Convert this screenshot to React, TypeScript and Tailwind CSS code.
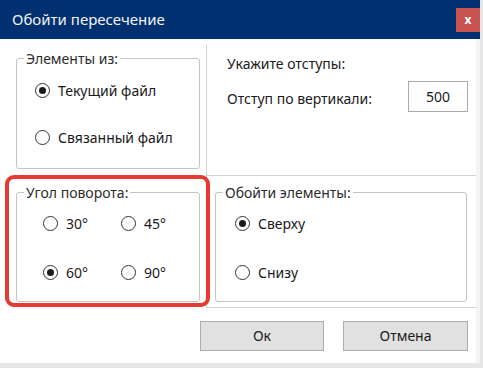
import React from 'react';

function Radio({ checked, label }: { checked?: boolean; label: string }) {
  return (
    <div className="flex items-center gap-[8px]">
      <span className="flex h-[15px] w-[15px] items-center justify-center rounded-full border border-[#333333] bg-white">
        {checked && <span className="h-[7px] w-[7px] rounded-full bg-[#1a1a1a]" />}
      </span>
      <span className="text-[14px] text-[#1a1a1a]">{label}</span>
    </div>
  );
}

function Group({
  title,
  className,
  children,
}: {
  title: string;
  className: string;
  children: React.ReactNode;
}) {
  return (
    <fieldset className={`rounded-[3px] border border-[#c4c4c4] px-0 ${className}`}>
      <legend className="ml-[7px] px-[2px] text-[14px] leading-[15px] text-[#2b2b2b]">{title}</legend>
      {children}
    </fieldset>
  );
}

export default function App() {
  return (
    <div
      className="h-[368px] w-[483px] bg-[#e6e6e6]"
      style={{ fontFamily: '"Noto Sans", "Open Sans", sans-serif' }}
    >
      <div className="flex h-[363px] w-[480px] flex-col">
        <div className="flex h-[39px] items-center justify-between bg-[#00306f] pl-[12px]">
          <span className="text-[15px] text-[#f2f4f8]">Обойти пересечение</span>
          <span className="flex h-[24px] w-[24px] items-center justify-center bg-[#c85250] text-[12px] font-bold text-white">
            x
          </span>
        </div>

        <div className="flex flex-1 flex-col border-r-[4px] border-[#f4f4f4] bg-white">
          <div className="flex h-[137px]">
            <div className="w-[206px] pl-[16px] pt-[12px]">
              <Group title="Элементы из:" className="h-[118px] w-[184px]">
                <div className="flex flex-col gap-[26px] pl-[18px] pt-[14px]">
                  <Radio checked label="Текущий файл" />
                  <Radio label="Связанный файл" />
                </div>
              </Group>
            </div>
            <div className="mt-[6px] flex flex-1 flex-col border-b border-l border-[#d4d4d4] pl-[20px] pt-[8px]">
              <span className="text-[14px] text-[#1a1a1a]">Укажите отступы:</span>
              <div className="mt-[7px] flex items-center justify-between pr-[8px]">
                <span className="mt-[4px] text-[14px] text-[#1a1a1a]">Отступ по вертикали:</span>
                <div className="flex h-[31px] w-[60px] items-center justify-center border border-[#a9a9a9] text-[14px] text-[#1a1a1a]">
                  500
                </div>
              </div>
            </div>
          </div>

          <div className="relative flex h-[132px]">
            <div className="w-[206px] pl-[16px] pt-[9px]">
              <Group title="Угол поворота:" className="h-[117px] w-[184px]">
                <div className="grid grid-cols-2 gap-y-[28px] pl-[26px] pt-[13px]">
                  <Radio label="30°" />
                  <Radio label="45°" />
                  <Radio checked label="60°" />
                  <Radio label="90°" />
                </div>
              </Group>
            </div>
            <div className="flex flex-1 border-b border-l border-[#d4d4d4] pl-[8px] pt-[9px]">
              <Group title="Обойти элементы:" className="h-[117px] w-[252px]">
                <div className="flex flex-col gap-[28px] pl-[19px] pt-[13px]">
                  <Radio checked label="Сверху" />
                  <Radio label="Снизу" />
                </div>
              </Group>
            </div>
            <div className="pointer-events-none absolute left-[5px] top-[-1px] h-[132px] w-[205px] rounded-[9px] border-[4px] border-[#e53b33]" />
          </div>

          <div className="flex flex-1 items-center justify-end gap-[19px] pr-[8px]">
            <button className="h-[30px] w-[124px] border border-[#adadad] bg-[#e1e1e1] text-[14px] text-[#1a1a1a]">
              Ок
            </button>
            <button className="h-[30px] w-[125px] border border-[#adadad] bg-[#e1e1e1] text-[14px] text-[#1a1a1a]">
              Отмена
            </button>
          </div>
        </div>
      </div>
    </div>
  );
}
